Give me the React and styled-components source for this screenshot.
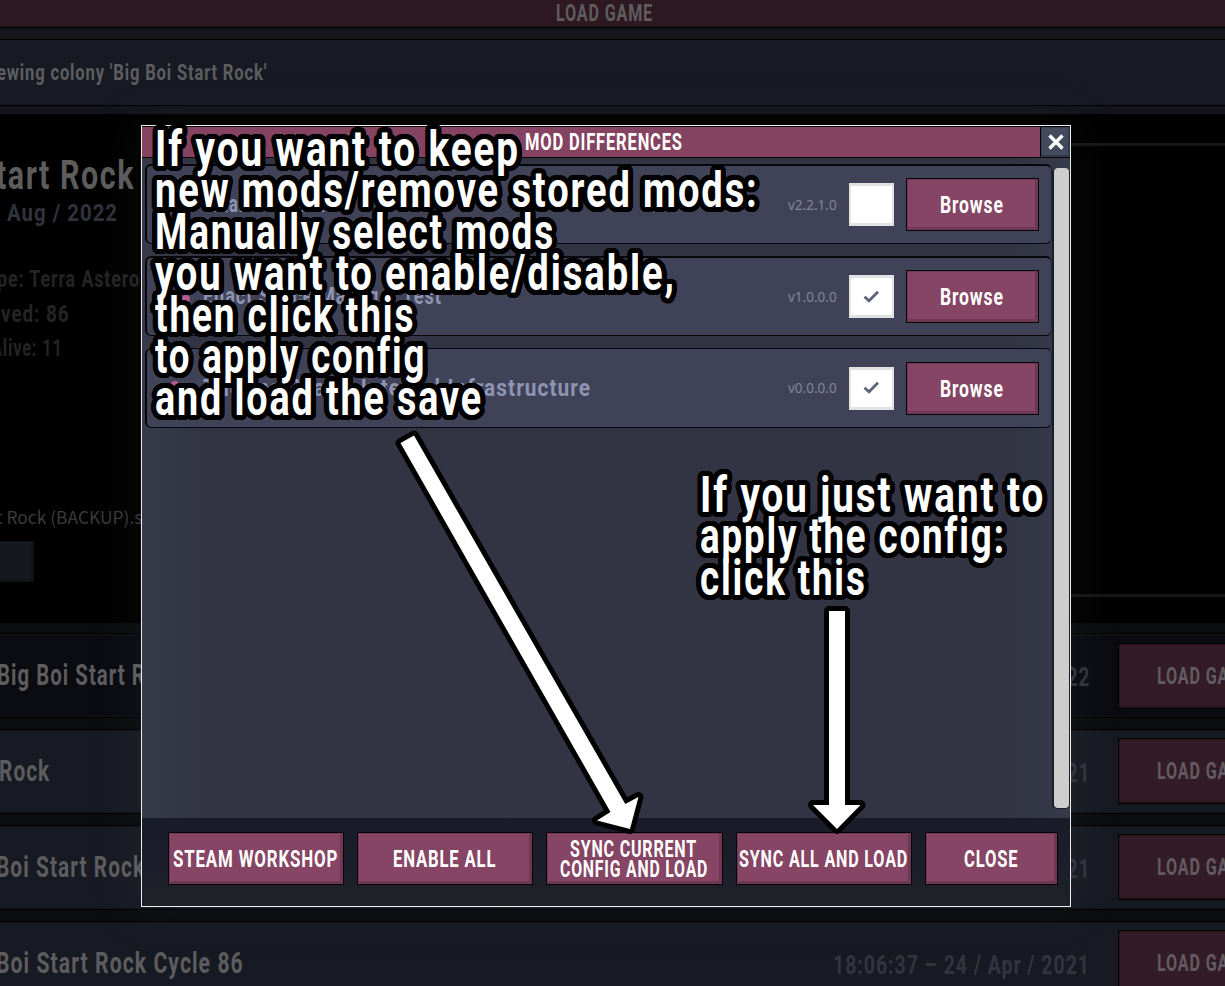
import React, { useLayoutEffect, useRef, useState } from "react";
import styled, { createGlobalStyle } from "styled-components";

const Global = createGlobalStyle`
  * { box-sizing: border-box; }
  html, body { margin: 0; background: #000; overflow: hidden; }
  body { font-family: Roboto, "Liberation Sans", sans-serif; }
`;

/* ---- condensed display text, squeezed to a given width ---- */
const FitBox = styled.span`
  display: block;
  flex: none;
  width: ${(p) => p.$w}px;
  height: ${(p) => p.$lh || p.$size}px;
  line-height: ${(p) => p.$lh || p.$size}px;
  font-size: ${(p) => p.$size}px;
  font-weight: 700;
  letter-spacing: 0.05em;
  color: ${(p) => p.$color || "#fff"};
  margin-left: ${(p) => p.$ml || 0}px;
  white-space: nowrap;
`;
const FitInner = styled.span`
  display: inline-block;
  transform-origin: 0 50%;
  transform: scaleX(var(--k));
`;

function Fit({ w, size, lh, color, ml, className, children }) {
  const ref = useRef(null);
  const [k, setK] = useState(1);
  useLayoutEffect(() => {
    const measure = () => ref.current && setK(w / ref.current.offsetWidth);
    measure();
    document.fonts?.ready.then(measure);
  }, [w, children]);
  return (
    <FitBox
      className={className}
      data-text={children}
      style={{ "--k": k }}
      $w={w} $size={size} $lh={lh} $color={color} $ml={ml}
    >
      <FitInner ref={ref}>{children}</FitInner>
    </FitBox>
  );
}

/* ---- dimmed load screen ---- */
const Screen = styled.div`
  position: relative;
  width: 1225px;
  height: 986px;
  overflow: hidden;
  background: #000;
  display: flex;
  flex-direction: column;
`;
const TopBar = styled.header`
  height: 28px;
  flex: none;
  background: #2e1822;
  border-bottom: 1px solid #000;
  box-shadow: inset 0 -1px #25131c;
  padding: 2px 0 0 556px;
`;
const ViewingWrap = styled.div`
  height: 86px;
  flex: none;
  padding: 11px 0 8px;
  background: #13151b;
`;
const ViewingBar = styled.div`
  height: 67px;
  border: solid #000;
  border-width: 1px 0;
  background: #171a22;
  display: flex;
  align-items: center;
`;
const Details = styled.section`
  height: 509px;
  flex: none;
  display: flex;
  justify-content: space-between;
  overflow: hidden;
`;
const Info = styled.div`
  width: 141px;
  padding-top: 41px;
  display: flex;
  flex-direction: column;
`;
const Stats = styled.div`
  margin-top: 38px;
  display: flex;
  flex-direction: column;
  gap: 10.5px;
`;
const FileName = styled.div`
  margin: 143px 0 0 -4px;
  height: 26px;
  line-height: 26px;
  font-family: "Noto Sans CJK SC", sans-serif;
  font-size: 17.4px;
  white-space: nowrap;
  color: #3b3b3b;
`;
const FileButton = styled.div`
  width: 34px;
  height: 41px;
  margin-top: 11px;
  background: #15181f;
  border: solid #101217;
  border-width: 1px 3px 3px 0;
`;
const Preview = styled.div`
  width: 154px;
  height: 454px;
  margin-top: 29px;
  border: solid #161616;
  border-width: 3px 0;
`;
const Saves = styled.section`
  flex: none;
  padding-top: 10px;
  display: flex;
  flex-direction: column;
  gap: 11px;
  background: #0b0c10;
`;
const SaveRow = styled.div`
  height: 85px;
  border: solid #000;
  border-width: 1px 0;
  background: ${(p) => (p.$selected ? "#0b0c12" : "#171a22")};
  box-shadow: inset 0 1px #111318, inset 0 -1px #111318;
  display: flex;
  align-items: center;
`;
const SaveTitle = styled.div`margin-top: -2px;`;
const SaveDate = styled.div`margin-top: 4px;`;
const Spacer = styled.div`flex: 1;`;
const LoadButton = styled.div`
  width: 107px;
  height: 66px;
  flex: none;
  margin-left: 28px;
  padding: 3px 0 0 38px;
  margin-top: ${(p) => (p.$selected ? 0 : -2)}px;
  background: #331b27;
  border: solid #000;
  border-width: 1px 0 1px 1px;
  box-shadow: inset 0 -2px #27141d, inset 1px 1px #27141d;
  display: flex;
  align-items: center;
  overflow: hidden;
`;

/* ---- dialog ---- */
const Dialog = styled.div`
  position: absolute;
  left: 141px;
  top: 125px;
  width: 930px;
  height: 782px;
  border: 1px solid #ededed;
  background: #323443;
  box-shadow: 0 0 50px 12px rgba(150, 148, 144, 0.055);
  display: flex;
  flex-direction: column;
`;
const TitleBar = styled.div`
  height: 32px;
  flex: none;
  border: solid #08080b;
  border-width: 1px 0;
  background: #834361;
  display: flex;
  align-items: center;
`;
const TitleText = styled.div`
  margin: 2px 0 0 383px;
`;
const CloseX = styled.div`
  width: 30px;
  height: 30px;
  flex: none;
  background: #444a5d;
  border-left: 1px solid #000;
  box-shadow: inset 1px 1px #393e4e, inset -2px -2px #343949;
  display: flex;
  align-items: center;
  justify-content: center;
`;
const Body = styled.div`
  height: 660px;
  flex: none;
  display: flex;
  background: linear-gradient(90deg, #373a49 0, #323443 60px, #323443 870px, #373a49 100%);
`;
const Mods = styled.div`
  width: 907px;
  margin-left: 3px;
  padding-top: 6px;
  display: flex;
  flex-direction: column;
  gap: 12px;
`;
const ModRow = styled.div`
  height: 80px;
  border: 1px solid #08080c;
  border-left-width: 2px;
  border-top-width: ${(p) => (p.$thick ? 2 : 1)}px;
  border-right-color: #202330;
  border-radius: 6px;
  background: #404358;
  padding: 0 12px 0 19px;
  display: flex;
  align-items: center;
`;
const ModName = styled.div`
  width: 430px;
  padding: 1px 0 0 11px;
`;
const Version = styled.div`
  width: 61px;
  font-family: "Noto Sans", sans-serif;
  font-size: 13.5px;
  line-height: 20px;
  color: #80859c;
`;
const Check = styled.div`
  width: 45px;
  height: 43px;
  margin-right: 12px;
  background: #fff;
  border: solid #e2e2e5;
  border-width: 3px 2px;
  display: flex;
  align-items: center;
  justify-content: center;
`;
const Button = styled.div`
  flex: none;
  width: ${(p) => p.$w}px;
  height: 53px;
  padding: 3px 2px 0 0;
  background: #864564;
  border: 1px solid #050305;
  box-shadow: inset -3px -3px #6e3853, inset 1px 1px #71395a;
  display: flex;
  flex-direction: column;
  align-items: center;
  justify-content: center;
`;
const Track = styled.div`
  width: 18px;
  height: 641px;
  margin-top: 10px;
  padding: 0 1px 0 2px;
  border-radius: 5px;
  background: #1b1e2b;
`;
const Thumb = styled.div`
  height: 640px;
  border-radius: 4px;
  background: #cdcdcd;
`;
const Footer = styled.footer`
  flex: 1;
  padding: 14px 0 0 26px;
  background: linear-gradient(#191c28 0, #1c1f2b 55%, #1f2127 100%);
  display: flex;
  gap: 13px;
`;

/* ---- annotations: every outline lies below every letter ---- */
const ring = (n, r) =>
  Array.from({ length: n }, (_, i) => {
    const a = (i / n) * Math.PI * 2;
    return `calc(${(Math.cos(a) * r).toFixed(2)}px / var(--k)) ${(Math.sin(a) * r).toFixed(2)}px 0 #000`;
  });
const outline = [...ring(32, 5), ...ring(12, 2.6)].join(",");

const Note = styled.div`
  position: absolute;
  z-index: 1;
  left: ${(p) => p.$x}px;
  top: ${(p) => p.$y}px;
  display: flex;
  flex-direction: column;
`;
const NoteLine = styled(Fit)`
  position: relative;
  &::before {
    content: attr(data-text);
    position: absolute;
    left: 0;
    top: 0;
    z-index: -1;
    color: #000;
    transform-origin: 0 50%;
    transform: scaleX(var(--k));
    text-shadow: ${outline};
  }
`;
const Arrows = styled.svg`
  position: absolute;
  left: 0;
  top: 0;
  pointer-events: none;
`;

const saves = [
  { title: "Big Boi Start Rock", w: 185, ml: -3, date: "2022", dw: 47, selected: true },
  { title: "Rock", w: 51, ml: -1, date: "2021", dw: 47 },
  { title: "Boi Start Rock", w: 149, ml: -4, date: "2021", dw: 47 },
  { title: "Boi Start Rock Cycle 86", w: 248, ml: -4, date: "18:06:37 – 24 / Apr / 2021", dw: 257 },
];
const mods = [
  { name: "Small Mod List", w: 122, version: "v2.2.1.0", on: false, ix: 10, iy: 12 },
  { name: "Enact Space Manager Test", w: 239, version: "v1.0.0.0", on: true, ix: 20, iy: 12 },
  { name: "Thermal Wall - Internal Infrastructure", w: 388, version: "v0.0.0.0", on: true, ix: 9, iy: 7 },
];
const actions = [
  { w: 176, lines: [["STEAM WORKSHOP", 165]] },
  { w: 176, lines: [["ENABLE ALL", 103]] },
  { w: 177, lines: [["SYNC CURRENT", 127], ["CONFIG AND LOAD", 148]] },
  { w: 176, lines: [["SYNC ALL AND LOAD", 169]] },
  { w: 133, lines: [["CLOSE", 54]] },
];
const noteA = [
  ["If you want to keep", 365],
  ["new mods/remove stored mods:", 604],
  ["Manually select mods", 400],
  ["you want to enable/disable,", 521],
  ["then click this", 260],
  ["to apply config", 271],
  ["and load the save", 328],
];
const noteB = [["If you just want to", 345], ["apply the config:", 306], ["click this", 167]];

export default function App() {
  return (
    <Screen>
      <Global />
      <TopBar><Fit w={97} size={23} lh={24} color="#5f5c5e">LOAD GAME</Fit></TopBar>
      <ViewingWrap>
        <ViewingBar>
          <Fit w={270} size={22} lh={24} ml={-3} color="#5d5e60">ewing colony 'Big Boi Start Rock'</Fit>
        </ViewingBar>
      </ViewingWrap>
      <Details>
        <Info>
          <Fit w={139} size={41} ml={-4} color="#5c5c5c">tart Rock</Fit>
          <Fit w={111} size={24} lh={34} ml={7} color="#30323d">Aug / 2022</Fit>
          <Stats>
            <Fit w={143} size={23} lh={24} ml={-3} color="#242424">pe: Terra Astero</Fit>
            <Fit w={69} size={23} lh={24} ml={1} color="#242424">ved: 86</Fit>
            <Fit w={72} size={23} lh={24} ml={-9} color="#242424">Alive: 11</Fit>
          </Stats>
          <FileName>t Rock (BACKUP).s</FileName>
          <FileButton />
        </Info>
        <Preview />
      </Details>
      <Saves>
        {saves.map((s, i) => (
          <SaveRow key={i} $selected={s.selected}>
            <SaveTitle><Fit w={s.w} size={29} lh={32} ml={s.ml} color="#5d5d5f">{s.title}</Fit></SaveTitle>
            <Spacer />
            <SaveDate><Fit w={s.dw} size={25} lh={22} color="#33353e">{s.date}</Fit></SaveDate>
            <LoadButton $selected={s.selected}>
              <Fit w={97} size={23} lh={24} color="#625c60">LOAD GAME</Fit>
            </LoadButton>
          </SaveRow>
        ))}
      </Saves>

      <Dialog>
        <TitleBar>
          <TitleText><Fit w={158} size={23} lh={28}>MOD DIFFERENCES</Fit></TitleText>
          <Spacer />
          <CloseX>
            <svg width="18" height="18" viewBox="0 0 18 18">
              <path d="M2.5 2.5 15.5 15.5M15.5 2.5 2.5 15.5" stroke="#fff" strokeWidth="3.4" />
            </svg>
          </CloseX>
        </TitleBar>
        <Body>
          <Mods>
            {mods.map((m, i) => (
              <ModRow key={m.name} $thick={i < 2}>
                <svg width="26" height="20" viewBox="0 0 26 20">
                  <ellipse cx={m.ix} cy={m.iy} rx="4" ry="4" fill="#b9588c" />
                </svg>
                <ModName><Fit w={m.w} size={23} lh={26} color="#8f94b2">{m.name}</Fit></ModName>
                <Spacer />
                <Version>{m.version}</Version>
                <Check>
                  {m.on && (
                    <svg width="17" height="14" viewBox="0 0 17 14">
                      <path d="M1.5 6.8 6 10.8 15 1.8" fill="none" stroke="#5d637b" strokeWidth="2.8" />
                    </svg>
                  )}
                </Check>
                <Button $w={133}><Fit w={64} size={23} lh={24}>Browse</Fit></Button>
              </ModRow>
            ))}
          </Mods>
          <Track><Thumb /></Track>
        </Body>
        <Footer>
          {actions.map((a) => (
            <Button key={a.lines[0][0]} $w={a.w}>
              {a.lines.map(([t, w]) => <Fit key={t} w={w} size={23} lh={20}>{t}</Fit>)}
            </Button>
          ))}
        </Footer>
      </Dialog>

      <Note $x={154.5} $y={128.5}>
        {noteA.map(([t, w]) => <NoteLine key={t} w={w} size={50} lh={41.5}>{t}</NoteLine>)}
      </Note>
      <Note $x={699.5} $y={474.5}>
        {noteB.map(([t, w]) => <NoteLine key={t} w={w} size={50} lh={41.5}>{t}</NoteLine>)}
      </Note>
      <Arrows width="1225" height="986" viewBox="0 0 1225 986">
        <g fill="#fff" stroke="#000" strokeWidth="10" strokeLinejoin="round" paintOrder="stroke">
          <path d="M400.5 443 414 435.5 625.3 804 638.5 797 630 829 597 820.5 610.5 812Z" />
          <path d="M829 611H845V805H860.5L837 829 813 805H829Z" />
        </g>
      </Arrows>
    </Screen>
  );
}
